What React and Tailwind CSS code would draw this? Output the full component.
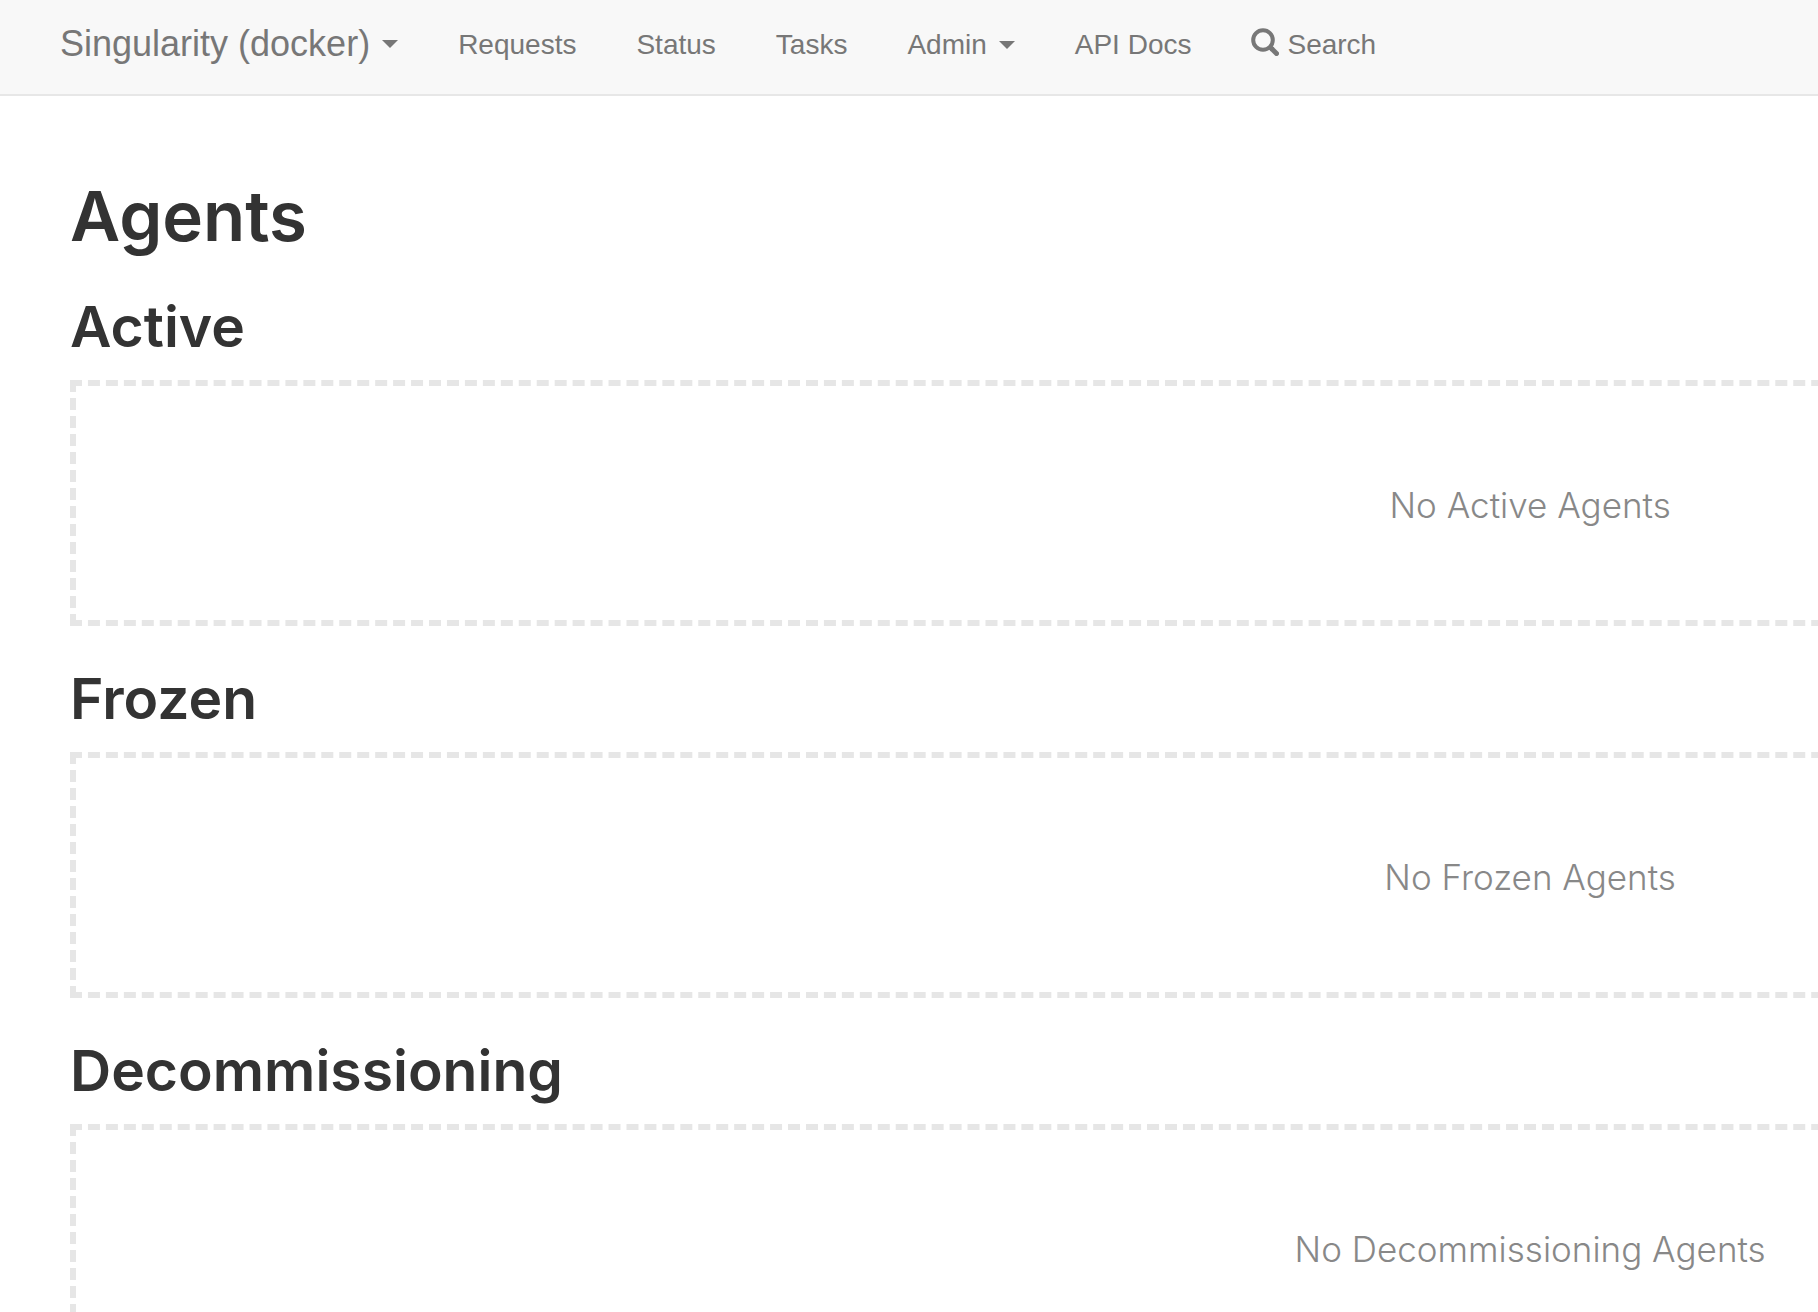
import React from 'react';

const navItems = [
  { label: 'Requests' },
  { label: 'Status' },
  { label: 'Tasks' },
  { label: 'Admin', dropdown: true },
  { label: 'API Docs' },
  { label: 'Search', search: true },
];

const agentStates = ['Active', 'Frozen', 'Decommissioning'];

function Caret() {
  return (
    <svg className="w-4 h-2 shrink-0" viewBox="0 0 16 8" fill="currentColor" aria-hidden="true">
      <path d="M0 0h16L8 8z" />
    </svg>
  );
}

function SearchIcon() {
  return (
    <svg className="w-7 h-7 mb-1.5 shrink-0" viewBox="0 0 28 28" fill="none" stroke="currentColor" aria-hidden="true">
      <circle cx="12" cy="12" r="9.8" strokeWidth="4" />
      <path d="M18.5 18.5l3 3" strokeWidth="5" />
      <path d="M21.5 21.5l4 4" strokeWidth="5" strokeLinecap="round" />
    </svg>
  );
}

function Navigation() {
  return (
    <nav className="flex items-start gap-[60px] pl-[60px] pt-6 pb-7 bg-[#f8f8f8] border-b-2 border-[#e7e7e7] text-[#777] whitespace-nowrap">
      <button type="button" className="flex items-center gap-3 text-4xl leading-10">
        Singularity (docker)
        <Caret />
      </button>
      <ul className="flex gap-[60px] text-[28px] leading-[42px]">
        {navItems.map(item => (
          <li key={item.label}>
            {item.dropdown ? (
              <button type="button" className="flex items-center gap-3">
                {item.label}
                <Caret />
              </button>
            ) : (
              <a href="#" className="flex items-center gap-2">
                {item.search && <SearchIcon />}
                {item.label}
              </a>
            )}
          </li>
        ))}
      </ul>
    </nav>
  );
}

function AgentSection({ state }) {
  return (
    <section className="mb-10">
      <h2 className="mb-5 font-['Inter',sans-serif] font-semibold text-[57px] leading-[66px]">{state}</h2>
      <div className="flex items-center justify-center pt-[94px] pb-[90px] border-6 border-dashed border-[#e6e6e6]">
        <p className="font-['Inter',sans-serif] font-light text-[35px] leading-[50px] text-[#888]">No {state} Agents</p>
      </div>
    </section>
  );
}

export default function App() {
  return (
    <div className="h-screen overflow-hidden bg-white text-[#333] font-['Liberation_Sans',Arial,sans-serif]">
      <Navigation />
      <main className="w-[168%] pl-[70px] pr-16 pt-20">
        <h1 className="mb-[38px] font-['Inter',sans-serif] font-semibold text-[69px] leading-[80px]">Agents</h1>
        {agentStates.map(state => (
          <AgentSection key={state} state={state} />
        ))}
      </main>
    </div>
  );
}
